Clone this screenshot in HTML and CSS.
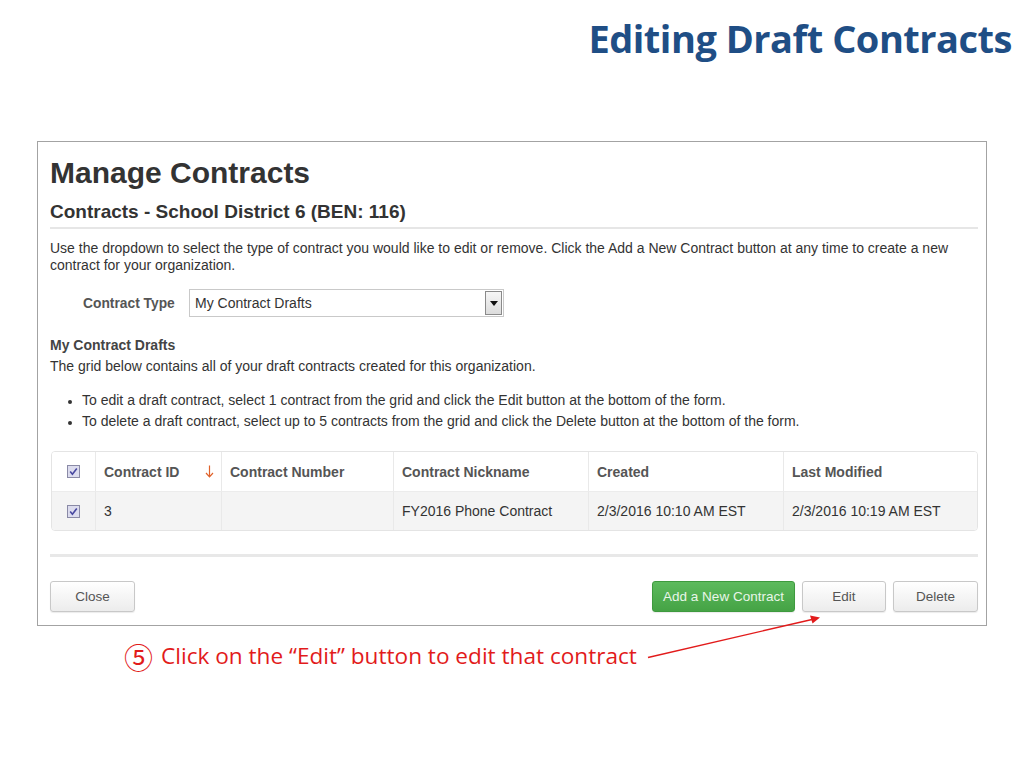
FILE: index.html
```html
<!DOCTYPE html>
<html lang="en">
<head>
<meta charset="utf-8">
<title>Editing Draft Contracts</title>
<link rel="stylesheet" href="styles.css">
</head>
<body>
<div class="slide">
  <h1 class="slide-title">Editing Draft Contracts</h1>

  <section class="shot">
    <h2 class="page-title">Manage Contracts</h2>
    <h3 class="sub-title">Contracts - School District 6 (BEN: 116)</h3>
    <p class="intro">Use the dropdown to select the type of contract you would like to edit or remove. Click the Add a New Contract button at any time to create a new contract for your organization.</p>

    <div class="type-row">
      <span class="type-label">Contract Type</span>
      <div class="select">
        <span class="select-value">My Contract Drafts</span>
        <span class="select-btn">
          <svg width="8" height="5" viewBox="0 0 8 5"><polygon points="0,0 8,0 4,5" fill="#111"/></svg>
        </span>
      </div>
    </div>

    <div class="drafts">
      <h4 class="drafts-title">My Contract Drafts</h4>
      <p class="drafts-text">The grid below contains all of your draft contracts created for this organization.</p>
      <ul class="rules">
        <li>To edit a draft contract, select 1 contract from the grid and click the Edit button at the bottom of the form.</li>
        <li>To delete a draft contract, select up to 5 contracts from the grid and click the Delete button at the bottom of the form.</li>
      </ul>
    </div>

    <div class="grid">
      <div class="cell head check">
        <svg class="cb" width="13" height="13" viewBox="0 0 13 13"><rect x="0.5" y="0.5" width="12" height="12" fill="#dcdcee" stroke="#8a8aa6"/><path d="M3.2 6.6 L5.4 9.2 L9.8 3.4" fill="none" stroke="#4848a0" stroke-width="1.6"/></svg>
      </div>
      <div class="cell head sort">Contract ID
        <svg class="sort-arrow" width="9" height="13" viewBox="0 0 9 13"><path d="M4.5 0.5 V11.5 M1 8 L4.5 11.8 L8 8" fill="none" stroke="#e0622a" stroke-width="1.2"/></svg>
      </div>
      <div class="cell head">Contract Number</div>
      <div class="cell head">Contract Nickname</div>
      <div class="cell head">Created</div>
      <div class="cell head">Last Modified</div>

      <div class="cell row check">
        <svg class="cb" width="13" height="13" viewBox="0 0 13 13"><rect x="0.5" y="0.5" width="12" height="12" fill="#dcdcee" stroke="#8a8aa6"/><path d="M3.2 6.6 L5.4 9.2 L9.8 3.4" fill="none" stroke="#4848a0" stroke-width="1.6"/></svg>
      </div>
      <div class="cell row">3</div>
      <div class="cell row"></div>
      <div class="cell row">FY2016 Phone Contract</div>
      <div class="cell row">2/3/2016 10:10 AM EST</div>
      <div class="cell row">2/3/2016 10:19 AM EST</div>
    </div>

    <div class="sep"></div>

    <div class="actions">
      <button class="btn">Close</button>
      <div class="actions-right">
        <button class="btn btn-green">Add a New Contract</button>
        <button class="btn btn-edit">Edit</button>
        <button class="btn btn-delete">Delete</button>
      </div>
    </div>
  </section>

  <p class="note"><span class="note-num">⑤</span><span class="note-text">Click on the “Edit” button to edit that contract</span></p>

  <svg class="pointer" width="1024" height="768" viewBox="0 0 1024 768">
    <line x1="648" y1="657.5" x2="812" y2="619.5" stroke="#e21b1b" stroke-width="1.4"/>
    <polygon points="820,617.5 810,615.5 812.5,623.5" fill="#e21b1b"/>
  </svg>
</div>
</body>
</html>
```

FILE: styles.css
```css
html, body {
  margin: 0;
  padding: 0;
  background: #ffffff;
}

body {
  width: 1024px;
  height: 768px;
  overflow: hidden;
  font-family: "Liberation Sans", Arial, sans-serif;
}

.slide {
  position: relative;
  width: 1024px;
  height: 768px;
  display: flex;
  flex-direction: column;
}

.slide-title {
  margin: 0;
  padding: 12px 12px 0 0;
  font-family: "Open Sans", "Noto Sans", sans-serif;
  font-weight: 700;
  font-size: 38px;
  line-height: 52px;
  letter-spacing: -0.5px;
  color: #1f4e85;
  text-align: right;
}

.shot {
  margin: 77px 0 0 37px;
  width: 950px;
  box-sizing: border-box;
  border: 1px solid #a3a3a3;
  padding: 14px 8px 13px 12px;
  color: #333;
  font-size: 14px;
}

.page-title {
  margin: 0;
  font-size: 30px;
  line-height: 34px;
  font-weight: 700;
  color: #333;
}

.sub-title {
  margin: 11px 0 0;
  padding-bottom: 4px;
  border-bottom: 2px solid #e6e6e6;
  font-size: 19px;
  line-height: 22px;
  font-weight: 700;
  color: #333;
}

.intro {
  margin: 11px 0 0;
  line-height: 17px;
}

.type-row {
  margin-top: 15px;
  padding-left: 33px;
  display: flex;
  align-items: center;
  height: 28px;
}

.type-label {
  width: 106px;
  font-weight: 700;
  color: #555;
  font-size: 13.8px;
}

.select {
  width: 315px;
  height: 28px;
  box-sizing: border-box;
  border: 1px solid #c9c9c9;
  display: flex;
  align-items: center;
  justify-content: space-between;
  padding: 0 1px 0 5px;
}

.select-value {
  color: #333;
}

.select-btn {
  width: 17px;
  height: 24px;
  box-sizing: border-box;
  border: 1px solid #8a8a8a;
  background: linear-gradient(#f6f6f6, #dcdcdc);
  display: flex;
  align-items: center;
  justify-content: center;
}

.drafts {
  margin-top: 18px;
  line-height: 21px;
}

.drafts-title {
  margin: 0;
  font-size: 14px;
  font-weight: 700;
  color: #444;
}

.drafts-text {
  margin: 0;
}

.rules {
  margin: 13px 0 0;
  padding-left: 32px;
}

.rules li::marker {
  font-size: 12px;
}

.grid {
  margin: 19px 0 0 1px;
  display: grid;
  grid-template-columns: 43px 126px 172px 195px 195px 1fr;
  border: 1px solid #e4e4e4;
  border-radius: 4px;
  overflow: hidden;
}

.cell {
  display: flex;
  align-items: center;
  padding-left: 8px;
  border-left: 1px solid #e9e9e9;
}

.cell.check {
  border-left: none;
  justify-content: center;
  padding-left: 0;
}

.cell.head {
  height: 39px;
  font-weight: 700;
  color: #555;
  background: #fff;
}

.cell.row {
  height: 38px;
  background: #f4f4f4;
  border-top: 1px solid #ececec;
  color: #333;
}

.sort {
  justify-content: space-between;
  padding-right: 7px;
}

.sep {
  margin-top: 23px;
  height: 3px;
  background: #e8e8e8;
}

.actions {
  margin-top: 24px;
  display: flex;
  align-items: center;
}

.actions-right {
  margin-left: auto;
  display: flex;
  gap: 7px;
}

.btn {
  height: 31px;
  width: 85px;
  box-sizing: border-box;
  border: 1px solid #c8c8c8;
  border-radius: 3px;
  background: linear-gradient(#ffffff, #ececec);
  color: #555;
  font-family: "Liberation Sans", Arial, sans-serif;
  font-size: 13.5px;
  padding: 0;
  box-shadow: 0 1px 1px rgba(0, 0, 0, 0.08);
}

.btn-green {
  width: 143px;
  border-color: #3e9a3e;
  background: linear-gradient(#5dba5d, #45a345);
  color: #e9f6e9;
}

.btn-edit {
  width: 84px;
}

.note {
  margin: 16px 0 0;
  padding-left: 124px;
  font-family: "Open Sans", "Noto Sans", sans-serif;
  font-size: 22.6px;
  line-height: 28px;
  color: #e21b1b;
  display: flex;
  align-items: center;
  gap: 8px;
}

.note-num {
  font-family: "Noto Sans CJK SC", "DejaVu Sans", sans-serif;
  font-size: 29px;
  line-height: 28px;
}

.pointer {
  position: absolute;
  left: 0;
  top: 0;
  pointer-events: none;
}
```
